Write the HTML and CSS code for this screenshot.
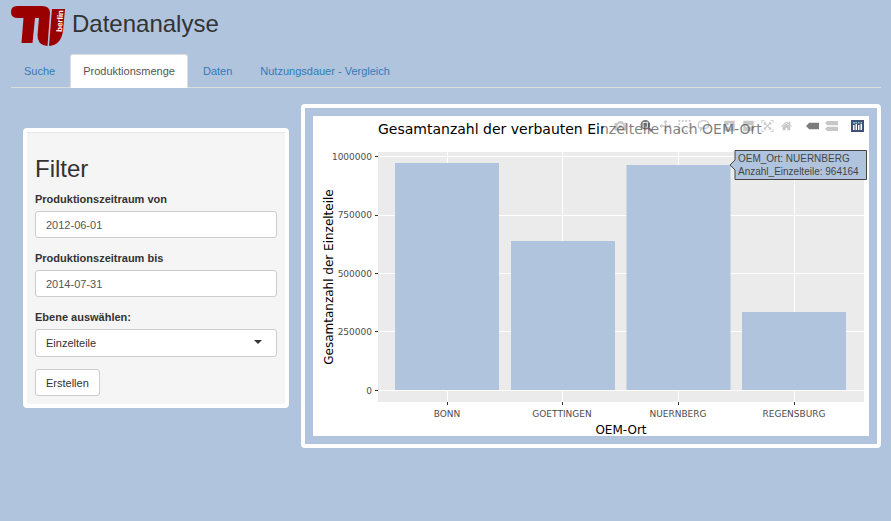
FILE: index.html
```html
<!DOCTYPE html>
<html lang="de">
<head>
<meta charset="utf-8">
<meta name="viewport" content="width=device-width, initial-scale=1">
<title>Datenanalyse</title>
<link rel="stylesheet" href="styles.css">
</head>
<body>
<header class="header">
  <svg class="logo" viewBox="0 0 54 40" role="img" aria-label="TU Berlin">
    <path d="M6 0H31Q39 0 39 7L36.500 40Q26 39 26.500 29L28 12H24L21.500 37H10.500L12.500 12H7Q0 12 0 6Q0 0 6 0Z"/>
    <path d="M41 3H54L52 25Q50 39 38 40Z"/>
    <text class="logo-text" transform="translate(51 26) rotate(-87)">berlin</text>
  </svg>
  <h1 class="title">Datenanalyse</h1>
</header>
<nav class="tabs">
  <a class="tab" href="#suche">Suche</a>
  <a class="tab active" href="#menge" aria-current="page">Produktionsmenge</a>
  <a class="tab" href="#daten">Daten</a>
  <a class="tab" href="#vergleich">Nutzungsdauer - Vergleich</a>
</nav>
<main class="row">
  <div class="side">
    <form class="well">
      <h2 class="well-title">Filter</h2>
      <div class="group">
        <label for="von">Produktionszeitraum von</label>
        <input class="control" id="von" type="text" value="2012-06-01">
      </div>
      <div class="group">
        <label for="bis">Produktionszeitraum bis</label>
        <input class="control" id="bis" type="text" value="2014-07-31">
      </div>
      <div class="group">
        <label for="ebene">Ebene auswählen:</label>
        <div class="select">
          <select class="control" id="ebene"><option>Einzelteile</option></select>
        </div>
      </div>
      <button class="btn" type="button">Erstellen</button>
    </form>
  </div>
  <section class="panel">
    <div class="plot">
      <svg class="chart" viewBox="0 0 556 320">
        <rect class="plot-bg" x="65" y="36" width="486" height="250"/>
        <path class="grid" d="M65 40.500H551M65 99.500H551M65 157.500H551M65 215.500H551M65 274.500H551M134.500 36V286M249.500 36V286M365.500 36V286M481.500 36V286"/>
        <g class="bars">
          <rect x="82" y="47" width="104" height="227"/>
          <rect x="198" y="125" width="104" height="149"/>
          <rect x="313.500" y="49" width="104" height="225"/>
          <rect x="429" y="196" width="104" height="78"/>
        </g>
        <path class="ticks" d="M62 40.500H65M62 99.500H65M62 157.500H65M62 215.500H65M62 274.500H65M134.500 286V289M249.500 286V289M365.500 286V289M481.500 286V289"/>
        <g class="tick-label end">
          <text x="59" y="44">1000000</text>
          <text x="59" y="102">750000</text>
          <text x="59" y="161">500000</text>
          <text x="59" y="219">250000</text>
          <text x="59" y="278">0</text>
        </g>
        <g class="tick-label mid">
          <text x="134" y="301">BONN</text>
          <text x="249" y="301">GOETTINGEN</text>
          <text x="365" y="301">NUERNBERG</text>
          <text x="481" y="301">REGENSBURG</text>
        </g>
        <text class="axis-title mid" x="308" y="318">OEM-Ort</text>
        <text class="axis-title mid" transform="translate(20 161) rotate(-90)">Gesamtanzahl der Einzelteile</text>
        <text class="chart-title" x="65" y="18">Gesamtanzahl der verbauten Einzelteile nach OEM-Ort</text>
        <path class="hover-box" d="M417 49L422 44V34.500H553.500V63.500H422V54Z"/>
        <g class="hover-text">
          <text x="425" y="46">OEM_Ort: NUERNBERG</text>
          <text x="425" y="59">Anzahl_Einzelteile: 964164</text>
        </g>
      </svg>
      <div class="modebar">
        <div class="modes">
          <button type="button" aria-label="Download"><svg viewBox="0 0 1000 1000"><path transform="matrix(1 0 0 -1 0 850)" d="m500 450c-83 0-150-67-150-150 0-83 67-150 150-150 83 0 150 67 150 150 0 83-67 150-150 150z m400 150h-120c-16 0-34 13-39 29l-31 93c-6 15-23 28-40 28h-340c-16 0-34-13-39-28l-31-94c-6-15-23-28-40-28h-120c-55 0-100-45-100-100v-450c0-55 45-100 100-100h800c55 0 100 45 100 100v450c0 55-45 100-100 100z m-400-550c-138 0-250 112-250 250 0 138 112 250 250 250 138 0 250-112 250-250 0-138-112-250-250-250z m365 380c-19 0-35 16-35 35 0 19 16 35 35 35 19 0 35-16 35-35 0-19-16-35-35-35z"/></svg></button>
        </div>
        <div class="modes">
          <button type="button" class="on" aria-label="Zoom"><svg viewBox="0 0 1000 1000"><path transform="matrix(1 0 0 -1 0 850)" d="m1000-25l-250 251c40 63 63 138 63 218 0 224-182 406-407 406-224 0-406-182-406-406s183-406 407-406c80 0 155 22 218 62l250-250 125 125z m-812 250l0 438 437 0 0-438-437 0z m62 375l313 0 0-312-313 0 0 312z"/></svg></button>
          <button type="button" aria-label="Pan"><svg viewBox="0 0 1000 1000"><path transform="matrix(1 0 0 -1 0 850)" d="m1000 350l-187 188 0-125-250 0 0 250 125 0-188 187-187-187 125 0 0-250-250 0 0 125-188-188 186-187 0 125 252 0 0-250-125 0 187-188 188 188-125 0 0 250 250 0 0-126 187 188z"/></svg></button>
          <button type="button" aria-label="Box Select"><svg viewBox="0 0 1000 1000"><path transform="matrix(1 0 0 -1 0 850)" d="m0 850l0-143 143 0 0 143-143 0z m286 0l0-143 143 0 0 143-143 0z m285 0l0-143 143 0 0 143-143 0z m286 0l0-143 143 0 0 143-143 0z m-857-286l0-143 143 0 0 143-143 0z m857 0l0-143 143 0 0 143-143 0z m-857-285l0-143 143 0 0 143-143 0z m857 0l0-143 143 0 0 143-143 0z m-857-286l0-143 143 0 0 143-143 0z m286 0l0-143 143 0 0 143-143 0z m285 0l0-143 143 0 0 143-143 0z m286 0l0-143 143 0 0 143-143 0z"/></svg></button>
          <button type="button" aria-label="Lasso Select"><svg viewBox="0 0 1000 1000"><path class="lasso" d="M200 700C-60 500 40 60 520 50S1110 560 700 690C540 740 420 640 300 640S170 760 280 790S380 700 300 640M280 790Q300 900 220 980"/></svg></button>
        </div>
        <div class="modes">
          <button type="button" aria-label="Zoom in"><svg viewBox="0 0 875 1000"><path transform="matrix(1 0 0 -1 0 850)" d="m1 787l0-875 875 0 0 875-875 0z m687-500l-187 0 0-187-125 0 0 187-188 0 0 125 188 0 0 187 125 0 0-187 187 0 0-125z"/></svg></button>
          <button type="button" aria-label="Zoom out"><svg viewBox="0 0 875 1000"><path transform="matrix(1 0 0 -1 0 850)" d="m0 788l0-876 875 0 0 876-875 0z m688-500l-500 0 0 125 500 0 0-125z"/></svg></button>
          <button type="button" aria-label="Autoscale"><svg viewBox="0 0 1000 1000"><path transform="matrix(1 0 0 -1 0 850)" d="m250 850l-187 0-63 0 0-62 0-188 63 0 0 188 187 0 0 62z m688 0l-188 0 0-62 188 0 0-188 62 0 0 188 0 62-62 0z m-875-938l0 188-63 0 0-188 0-62 63 0 187 0 0 62-187 0z m875 188l0-188-188 0 0-62 188 0 62 0 0 62 0 188-62 0z m-125 188l-1 0-93-94-156 156 156 156 92-93 2 0 0 250-250 0 0-2 93-92-156-156-156 156 94 92 0 2-250 0 0-250 0 0 93 93 157-156-157-156-93 94 0 0 0-250 250 0 0 0-94 93 156 157 156-157-93-93 0 0 250 0 0 250z"/></svg></button>
          <button type="button" aria-label="Reset axes"><svg viewBox="0 0 929 1000"><path transform="matrix(1 0 0 -1 0 850)" d="m786 296v-267q0-15-11-26t-25-10h-214v214h-143v-214h-214q-15 0-25 10t-11 26v267q0 1 0 2t0 2l321 264 321-264q1-1 1-4z m124 39l-34-41q-5-5-12-6h-2q-7 0-12 3l-386 322-386-322q-7-4-13-4-7 2-12 7l-35 41q-4 5-3 13t6 12l401 334q18 15 42 15t43-15l136-114v109q0 8 5 13t13 5h107q8 0 13-5t5-13v-227l122-102q5-5 6-12t-4-13z"/></svg></button>
        </div>
        <div class="modes">
          <button type="button" class="on" aria-label="Show closest data on hover"><svg viewBox="0 0 1500 1000"><path transform="matrix(1 0 0 -1 0 850)" d="m375 725l0 0-375-375 375-374 0-1 1125 0 0 750-1125 0z"/></svg></button>
          <button type="button" aria-label="Compare data on hover"><svg viewBox="0 0 1125 1000"><path transform="matrix(1 0 0 -1 0 850)" d="m187 786l0 2-187-188 188-187 0 0 937 0 0 373-938 0z m0-499l0 1-187-188 188-188 0 0 937 0 0 376-938-1z"/></svg></button>
        </div>
        <div class="modes">
          <button type="button" aria-label="Plotly"><svg viewBox="0 0 13 12"><path class="mark-bg" d="M0 0H13V12H0Z"/><path class="mark-dots" d="M2 2H4V3.500H2ZM4.500 2H6V3.500H4.500ZM7 2H8.500V3.500H7ZM9.500 2H11V3.500H9.500Z"/><path class="mark-bars" d="M2 5H3.500V10H2ZM4.500 4H6V10H4.500ZM7 5H8.500V10H7ZM9.500 4H11V10H9.500Z"/></svg></button>
        </div>
      </div>
    </div>
  </section>
</main>
</body>
</html>
```
FILE: styles.css
```css
* { box-sizing: border-box; }
body {
  margin: 0;
  padding: 6px 10px 0 11px;
  background: #b0c4de;
  color: #333;
  font: 11px/16px "Liberation Sans", Arial, sans-serif;
}
h1, h2 { font-size: 24px; font-weight: 400; line-height: 26px; }
.header { display: flex; gap: 7px; height: 40px; }
.logo { width: 54px; height: 40px; fill: #9b0000; }
.logo-text { fill: #fff; font-size: 8px; font-weight: 700; }
.title { margin: 5px 0 0; }
.tabs { display: flex; gap: 2px; margin-top: 8px; border-bottom: 1px solid #ddd; }
.tab {
  margin-bottom: -1px;
  padding: 8px 12px;
  border: 1px solid transparent;
  border-radius: 3px 3px 0 0;
  color: #337ab7;
  text-decoration: none;
}
.tab.active { color: #555; background: #fff; border-color: #ddd; border-bottom-color: #fff; }
.row {
  display: grid;
  grid-template-columns: minmax(0, 1fr) minmax(0, 2fr);
  align-items: start;
  margin-top: 16px;
}
.side { padding: 24px 12px 0; }
.well {
  padding: 8px;
  border: 4px solid #fff;
  border-radius: 4px;
  background: #f5f5f5;
  box-shadow: inset 0 1px 1px rgba(0, 0, 0, .06);
}
.well-title { margin: 16px 0 9px; }
.group { margin-bottom: 12px; }
label { display: block; margin-bottom: 4px; font-weight: 700; }
.control {
  display: block;
  width: 100%;
  height: 27px;
  padding: 0 10px;
  border: 1px solid #ccc;
  border-radius: 3px;
  background: #fff;
  color: #555;
  font: inherit;
}
.select { position: relative; }
select.control { height: 28px; color: #333; appearance: none; }
.select::after {
  content: "";
  position: absolute;
  top: 11px;
  right: 15px;
  border: 4px solid transparent;
  border-top-color: #333;
  border-bottom: 0;
  pointer-events: none;
}
.btn {
  display: block;
  height: 27px;
  padding: 0 10px;
  border: 1px solid #ccc;
  border-radius: 3px;
  background: #fff;
  color: #333;
  font: inherit;
}
.panel { padding: 8px; border: 4px solid #fff; border-radius: 4px; }
.plot { position: relative; background: #fff; }
.chart { display: block; width: 100%; font-family: "DejaVu Sans", Verdana, sans-serif; }
.plot-bg { fill: #ebebeb; }
.grid { stroke: #fff; fill: none; }
.ticks { stroke: #333; fill: none; }
.bars { fill: #b0c4de; }
.tick-label { font-size: 9px; fill: #4d4d4d; }
.axis-title { font-size: 12px; fill: #000; }
.chart-title { font-size: 14px; fill: #000; }
.end { text-anchor: end; }
.mid { text-anchor: middle; }
.hover-box { fill: #b0c4de; stroke: #444; }
.hover-text { font-family: "Liberation Sans", Arial, sans-serif; font-size: 10px; fill: #444; }
.modebar {
  position: absolute;
  top: 0;
  right: 2px;
  display: flex;
  padding: 3px 0;
  background: rgba(255, 255, 255, .5);
}
.modes { display: flex; padding-left: 7px; }
.modes button {
  display: flex;
  align-items: center;
  justify-content: center;
  width: 19px;
  height: 14px;
  padding: 0;
  border: 0;
  background: none;
}
.modes svg { flex: none; width: 13px; height: 12px; fill: #444; fill-opacity: .3; }
.modes .on svg { fill-opacity: .7; }
.lasso { fill: none; stroke: #444; stroke-opacity: .3; stroke-width: 95; }
.mark-bg { fill: #3f4f75; fill-opacity: 1; }
.mark-dots { fill: #80cfbe; fill-opacity: 1; }
.mark-bars { fill: #fff; fill-opacity: 1; }
```
